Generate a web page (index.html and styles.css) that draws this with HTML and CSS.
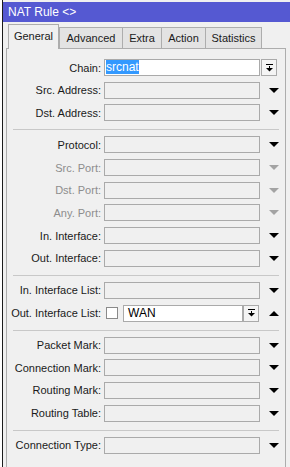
FILE: index.html
```html
<!DOCTYPE html>
<html lang="en">
<head>
    <meta charset="UTF-8">
    <title>NAT Rule</title>
    <link rel="stylesheet" href="styles.css">
</head>
<body>
    <div class="desk">
        <div class="behind"></div>
        <div class="window">
            <div class="titlebar">NAT Rule &lt;&gt;</div>
            <div class="tabs">
                <div class="tab active">General</div>
                <div class="tab tab-advanced">Advanced</div>
                <div class="tab tab-extra">Extra</div>
                <div class="tab tab-action">Action</div>
                <div class="tab tab-stats">Statistics</div>
            </div>
            <div class="panel">
                <div class="group">
                    <div class="row">
                        <label>Chain:</label>
                        <div class="field white"><span class="selected">srcnat</span></div>
                        <div class="btn-box">
                            <svg width="7" height="8" viewBox="0 0 7 8"><rect x="0" y="0" width="7" height="1" fill="#000"/><rect x="3" y="2" width="1" height="2" fill="#000"/><polygon points="0,4 7,4 3.5,7.5" fill="#000"/></svg>
                        </div>
                    </div>
                    <div class="row">
                        <label>Src. Address:</label>
                        <div class="field"></div>
                        <div class="arrow"></div>
                    </div>
                    <div class="row">
                        <label>Dst. Address:</label>
                        <div class="field"></div>
                        <div class="arrow"></div>
                    </div>
                </div>
                <div class="sep"></div>
                <div class="group">
                    <div class="row">
                        <label>Protocol:</label>
                        <div class="field"></div>
                        <div class="arrow"></div>
                    </div>
                    <div class="row disabled">
                        <label>Src. Port:</label>
                        <div class="field"></div>
                        <div class="arrow"></div>
                    </div>
                    <div class="row disabled">
                        <label>Dst. Port:</label>
                        <div class="field"></div>
                        <div class="arrow"></div>
                    </div>
                    <div class="row disabled">
                        <label>Any. Port:</label>
                        <div class="field"></div>
                        <div class="arrow"></div>
                    </div>
                    <div class="row">
                        <label>In. Interface:</label>
                        <div class="field"></div>
                        <div class="arrow"></div>
                    </div>
                    <div class="row">
                        <label>Out. Interface:</label>
                        <div class="field"></div>
                        <div class="arrow"></div>
                    </div>
                </div>
                <div class="sep"></div>
                <div class="group">
                    <div class="row">
                        <label>In. Interface List:</label>
                        <div class="field"></div>
                        <div class="arrow"></div>
                    </div>
                    <div class="row">
                        <label>Out. Interface List:</label>
                        <div class="combo">
                            <span class="check"></span>
                            <div class="field white wan">WAN</div>
                            <div class="btn-box">
                                <svg width="7" height="8" viewBox="0 0 7 8"><rect x="0" y="0" width="7" height="1" fill="#000"/><rect x="3" y="2" width="1" height="2" fill="#000"/><polygon points="0,4 7,4 3.5,7.5" fill="#000"/></svg>
                            </div>
                        </div>
                        <div class="arrow up"></div>
                    </div>
                </div>
                <div class="sep"></div>
                <div class="group">
                    <div class="row">
                        <label>Packet Mark:</label>
                        <div class="field"></div>
                        <div class="arrow"></div>
                    </div>
                    <div class="row">
                        <label>Connection Mark:</label>
                        <div class="field"></div>
                        <div class="arrow"></div>
                    </div>
                    <div class="row">
                        <label>Routing Mark:</label>
                        <div class="field"></div>
                        <div class="arrow"></div>
                    </div>
                    <div class="row">
                        <label>Routing Table:</label>
                        <div class="field"></div>
                        <div class="arrow"></div>
                    </div>
                </div>
                <div class="sep"></div>
                <div class="group">
                    <div class="row">
                        <label>Connection Type:</label>
                        <div class="field"></div>
                        <div class="arrow"></div>
                    </div>
                </div>
            </div>
        </div>
    </div>
</body>
</html>
```

FILE: styles.css
```css
body {
    margin: 0;
    width: 290px;
    height: 467px;
    overflow: hidden;
    font-family: 'Liberation Sans', Arial, sans-serif;
    font-size: 11px;
    background-color: #ffffff;
}
.desk {
    display: flex;
    height: 467px;
}
.behind {
    width: 2px;
    background-color: #ffffff;
}
.window {
    flex: 1;
    display: flex;
    flex-direction: column;
    border-left: 1px solid #1c1c1c;
    padding-top: 2px;
    background-color: #f0f0f0;
}
.titlebar {
    height: 20px;
    line-height: 20px;
    padding-left: 5px;
    background-color: #5559d2;
    color: #ffffff;
    font-size: 12px;
}
.tabs {
    display: flex;
    align-items: flex-end;
    padding-left: 5px;
    height: 26px;
    position: relative;
    z-index: 1;
}
.tab {
    height: 20px;
    line-height: 20px;
    text-align: center;
    background-color: #e3e3e3;
    border: 1px solid #adadad;
    border-bottom: none;
    margin-left: -1px;
    color: #1a1a1a;
    font-size: 11px;
}
.tab.active {
    width: 49px;
    height: 24px;
    line-height: 22px;
    background-color: #f0f0f0;
    margin-left: 0;
    margin-right: 1px;
    margin-bottom: -1px;
}
.tab-advanced {
    width: 62px;
}
.tab-extra {
    width: 38px;
}
.tab-action {
    width: 43px;
}
.tab-stats {
    width: 55px;
}
.panel {
    flex: 1;
    margin-left: 3px;
    margin-right: 4px;
    border: 1px solid #adadad;
    border-bottom: none;
    padding-top: 10px;
}
.group {
    display: flex;
    flex-direction: column;
    gap: 5.7px;
}
.row {
    display: grid;
    grid-template-columns: 94px 156px 20px;
    column-gap: 3px;
    align-items: center;
    height: 17px;
}
.row label {
    text-align: right;
    white-space: nowrap;
    color: #1a1a1a;
}
.row.disabled label {
    color: #8d8d8d;
}
.field {
    height: 17px;
    box-sizing: border-box;
    border: 1px solid #aaaaaa;
    background-color: #f0f0f0;
    line-height: 15px;
}
.field.white {
    background-color: #ffffff;
}
.selected {
    display: inline-block;
    margin-left: 1px;
    background-color: #3399ff;
    color: #ffffff;
    font-size: 12px;
    line-height: 14px;
}
.btn-box {
    width: 16px;
    height: 17px;
    box-sizing: border-box;
    border: 1px solid #aaaaaa;
    background-color: #f4f4f4;
    display: flex;
    align-items: center;
    justify-content: center;
}
.row > .btn-box {
    justify-self: start;
    margin-left: -2px;
}
.arrow {
    justify-self: center;
    width: 0;
    height: 0;
    border-left: 5px solid transparent;
    border-right: 5px solid transparent;
    border-top: 5px solid #000;
    margin-left: 1px;
}
.arrow.up {
    border-top: none;
    border-bottom: 5px solid #000;
}
.row.disabled .arrow {
    border-top-color: #a3a3a3;
}
.combo {
    display: flex;
    align-items: center;
}
.check {
    width: 12px;
    height: 12px;
    box-sizing: border-box;
    border: 1px solid #8a8a8a;
    background-color: #ffffff;
    margin-left: 2px;
    margin-right: 5px;
}
.wan {
    width: 120px;
    padding-left: 4px;
    font-size: 12px;
}
.sep {
    height: 0;
    border-top: 1px solid #c8c8c8;
    margin: 8px 6px 6px 6px;
}
```
